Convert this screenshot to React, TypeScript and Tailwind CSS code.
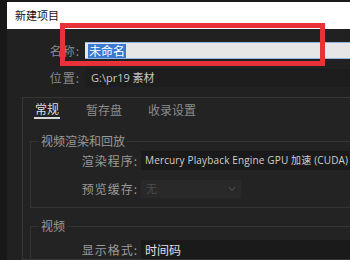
const cjk = { fontFamily: '"Noto Sans CJK SC", "Noto Sans", sans-serif' };
const latin = { fontFamily: '"Open Sans", "Noto Sans CJK SC", sans-serif' };

function Row({ label, children }: { label: string; children: React.ReactNode }) {
  return (
    <div className="flex items-center h-[19px]">
      <div className="w-[110px] text-right pr-[3px] text-[12px] text-[#9a9a9a] tracking-[1px]" style={cjk}>
        {label}
      </div>
      {children}
    </div>
  );
}

export default function App() {
  return (
    <div className="relative w-[350px] h-[260px] overflow-hidden bg-[#1a1a1a] flex">
      {/* left edge of the window behind */}
      <div className="w-[7px] shrink-0 bg-[#181818]" />

      <div className="flex-1 flex flex-col min-w-0">
        {/* title bar */}
        <div className="mt-[2px] h-[27px] bg-white flex items-center pl-[8px] text-[11px] text-[#111]" style={cjk}>
          新建项目
        </div>

        <div className="flex-1 bg-[#212121] flex flex-col">
          {/* name */}
          <div className="flex items-center mt-[13px] h-[17px]">
            <div className="w-[78px] text-right pr-[5px] text-[12px] text-[#8a8a8a] tracking-[1px]" style={cjk}>
              名称:
            </div>
            <div className="flex-1 h-[17px] bg-[#e6e6e6] border-y border-[#8fb6e6] flex items-center pl-[3px]">
              <span className="bg-[#3b78d0] text-white text-[12px] leading-[14px] px-[1px]" style={cjk}>
                未命名
              </span>
            </div>
          </div>

          {/* location */}
          <div className="flex items-center mt-[10px] h-[18px]">
            <div className="w-[78px] text-right pr-[5px] text-[12px] text-[#8a8a8a] tracking-[1px]" style={cjk}>
              位置:
            </div>
            <div className="flex-1 h-[18px] bg-[#1d1d1d] flex items-center pl-[6px] text-[11px] text-[#c8c8c8]" style={latin}>
              G:\pr19 素材
            </div>
          </div>

          {/* settings panel */}
          <div className="mt-[10px] ml-[15px] -mr-[4px] flex-1 border border-[#353535] bg-[#232323] flex flex-col">
            <div className="flex items-end h-[21px] pl-[11px] gap-[26px] text-[12px]" style={cjk}>
              <div className="text-[#dcdcdc] border-b-2 border-[#d8d8d8] leading-[16px] px-[1px]">常规</div>
              <div className="text-[#8c8c8c] leading-[18px]">暂存盘</div>
              <div className="text-[#8c8c8c] leading-[18px]">收录设置</div>
            </div>

            <fieldset className="mt-[13px] ml-[7px] h-[76px] border-l border-t border-b border-[#343434]">
              <legend className="ml-[8px] px-[2px] text-[12px] text-[#9a9a9a]" style={cjk}>
                视频渲染和回放
              </legend>
              <div className="mt-[1px]">
                <Row label="渲染程序:">
                  <div className="flex-1 h-[19px] bg-[#1a1a1a] flex items-center pl-[4px] text-[10px] tracking-[0.15px] text-[#cfcfcf] whitespace-nowrap overflow-hidden" style={latin}>
                    Mercury Playback Engine GPU 加速 (CUDA)
                  </div>
                </Row>
              </div>
              <div className="mt-[9px]">
                <Row label="预览缓存:">
                  <div className="w-[100px] h-[18px] bg-[#292929] flex items-center justify-between px-[5px] text-[11px] text-[#4c4c4c]" style={cjk}>
                    <span>无</span>
                    <svg width="8" height="6" viewBox="0 0 8 6">
                      <path d="M1 1 L4 4.5 L7 1" fill="none" stroke="#444" strokeWidth="1.2" />
                    </svg>
                  </div>
                </Row>
              </div>
            </fieldset>

            <fieldset className="mt-[9px] ml-[7px] border-l border-t border-[#343434] flex-1">
              <legend className="ml-[8px] px-[2px] text-[12px] text-[#9a9a9a]" style={cjk}>
                视频
              </legend>
              <div className="mt-[5px]">
                <Row label="显示格式:">
                  <div className="flex-1 h-[19px] bg-[#1a1a1a] flex items-center pl-[4px] text-[12px] text-[#e0e0e0]" style={cjk}>
                    时间码
                  </div>
                </Row>
              </div>
            </fieldset>
          </div>
        </div>
      </div>

      {/* red annotation frame */}
      <div className="absolute left-[60px] top-[23px] w-[265px] h-[43px] border-[5px] border-[#e8323a]" />
    </div>
  );
}
